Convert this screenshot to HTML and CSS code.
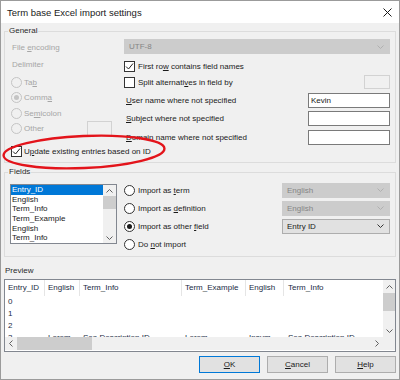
FILE: index.html
```html
<!DOCTYPE html>
<html lang="en">
<head>
    <meta charset="UTF-8">
    <title>Term base Excel import settings</title>
    <link rel="stylesheet" href="styles.css">
</head>
<body>
    <div class="window">
        <div class="titlebar">
            <span class="title">Term base Excel import settings</span>
            <svg class="close" width="9" height="9" viewBox="0 0 9 9"><path d="M0.5 0.5L8.5 8.5M8.5 0.5L0.5 8.5" stroke="#1a1a1a" stroke-width="1" fill="none"/></svg>
        </div>

        <div class="client">
            <fieldset class="group general">
                <legend>General</legend>
                <div class="cols">
                    <div class="left">
                        <div class="lrow r-enc dis"><span>File <u>e</u>ncoding</span></div>
                        <div class="lrow r-delim dis"><span>Delimiter</span></div>
                        <div class="lrow r-tab dis"><span class="radio dis"></span><span>Ta<u>b</u></span></div>
                        <div class="lrow r-comma dis"><span class="radio dis on"></span><span>Comm<u>a</u></span></div>
                        <div class="lrow r-semi dis"><span class="radio dis"></span><span>Se<u>m</u>icolon</span></div>
                        <div class="lrow r-other dis"><span class="radio dis"></span><span class="other-label">Other</span><span class="smallbox"></span></div>
                    </div>
                    <div class="right">
                        <div class="combo dis wide"><span>UTF-8</span>
                            <svg class="chev" width="7" height="4" viewBox="0 0 7 4"><path d="M0.5 0.5L3.5 3.5L6.5 0.5" fill="none" stroke="#b0b0b0"/></svg>
                        </div>
                        <div class="rrow r-first"><span class="check on"><svg width="9" height="9" viewBox="0 0 9 9"><path d="M1 4.5L3.5 7L8 1.5" fill="none" stroke="#222" stroke-width="1"/></svg></span><span>First ro<u>w</u> contains field names</span></div>
                        <div class="rrow r-split"><span class="check"></span><span>Split alternati<u>v</u>es in field by</span><span class="smallbox split-box"></span></div>
                        <div class="rrow r-user"><span><u>U</u>ser name where not specified</span><span class="textbox">Kevin</span></div>
                        <div class="rrow r-subj"><span><u>S</u>ubject where not specified</span><span class="textbox"></span></div>
                        <div class="rrow r-dom"><span><u>D</u>omain name where not specified</span><span class="textbox"></span></div>
                    </div>
                </div>
                <div class="update"><span class="check on"><svg width="9" height="9" viewBox="0 0 9 9"><path d="M1 4.5L3.5 7L8 1.5" fill="none" stroke="#222" stroke-width="1"/></svg></span><span>U<u>p</u>date existing entries based on ID</span></div>
            </fieldset>

            <fieldset class="group fields">
                <legend>Fields</legend>
                <div class="fields-body">
                    <div class="listbox">
                        <div class="items">
                            <div class="item sel">Entry_ID</div>
                            <div class="item">English</div>
                            <div class="item">Term_Info</div>
                            <div class="item">Term_Example</div>
                            <div class="item">English</div>
                            <div class="item">Term_Info</div>
                        </div>
                        <div class="lb-scroll">
                            <div class="arrow up"><svg width="7" height="4" viewBox="0 0 7 4"><path d="M0.5 3.5L3.5 0.5L6.5 3.5" fill="none" stroke="#606060"/></svg></div>
                            <div class="lb-thumb"></div>
                            <div class="lb-track"></div>
                            <div class="arrow down"><svg width="7" height="4" viewBox="0 0 7 4"><path d="M0.5 0.5L3.5 3.5L6.5 0.5" fill="none" stroke="#606060"/></svg></div>
                        </div>
                    </div>
                    <div class="options">
                        <div class="orow">
                            <span class="radio"></span><span>Import as <u>t</u>erm</span>
                            <div class="combo dis"><span>English</span><svg class="chev" width="7" height="4" viewBox="0 0 7 4"><path d="M0.5 0.5L3.5 3.5L6.5 0.5" fill="none" stroke="#b0b0b0"/></svg></div>
                        </div>
                        <div class="orow">
                            <span class="radio"></span><span>Import as <u>d</u>efinition</span>
                            <div class="combo dis"><span>English</span><svg class="chev" width="7" height="4" viewBox="0 0 7 4"><path d="M0.5 0.5L3.5 3.5L6.5 0.5" fill="none" stroke="#b0b0b0"/></svg></div>
                        </div>
                        <div class="orow">
                            <span class="radio on"></span><span>Import as other <u>f</u>ield</span>
                            <div class="combo active"><span>Entry ID</span><svg class="chev" width="7" height="4" viewBox="0 0 7 4"><path d="M0.5 0.5L3.5 3.5L6.5 0.5" fill="none" stroke="#333"/></svg></div>
                        </div>
                        <div class="orow">
                            <span class="radio"></span><span>Do <u>n</u>ot import</span>
                        </div>
                    </div>
                </div>
            </fieldset>

            <div class="preview-label">Preview</div>
            <div class="preview">
                <div class="pv-main">
                    <div class="pv-table">
                        <div class="pv-head">
                            <span class="c1">Entry_ID</span><span class="c2">English</span><span class="c3">Term_Info</span><span class="c4">Term_Example</span><span class="c5">English</span><span class="c6">Term_Info</span>
                        </div>
                        <div class="pv-row"><span class="c1">0</span></div>
                        <div class="pv-row"><span class="c1">1</span></div>
                        <div class="pv-row"><span class="c1">2</span></div>
                        <div class="pv-row"><span class="c1">3</span><span class="c2">Lorem</span><span class="c3">Sea Description ID</span><span class="c4">Lorem</span><span class="c5">Ipsum</span><span class="c6">Sea Description ID</span></div>
                    </div>
                    <div class="vscroll">
                        <div class="arrow v"><svg width="7" height="4" viewBox="0 0 7 4"><path d="M0.5 3.5L3.5 0.5L6.5 3.5" fill="none" stroke="#606060"/></svg></div>
                        <div class="v-thumb"></div>
                        <div class="v-track"></div>
                        <div class="arrow v"><svg width="7" height="4" viewBox="0 0 7 4"><path d="M0.5 0.5L3.5 3.5L6.5 0.5" fill="none" stroke="#606060"/></svg></div>
                    </div>
                </div>
                <div class="hscroll-row">
                    <div class="arrow h"><svg width="4" height="7" viewBox="0 0 4 7"><path d="M3.5 0.5L0.5 3.5L3.5 6.5" fill="none" stroke="#606060"/></svg></div>
                    <div class="h-thumb"></div>
                    <div class="h-track"></div>
                    <div class="arrow h"><svg width="4" height="7" viewBox="0 0 4 7"><path d="M0.5 0.5L3.5 3.5L0.5 6.5" fill="none" stroke="#606060"/></svg></div>
                    <div class="corner"></div>
                </div>
            </div>

            <div class="buttons">
                <button class="btn default"><u>O</u>K</button>
                <button class="btn"><u>C</u>ancel</button>
                <button class="btn"><u>H</u>elp</button>
            </div>
        </div>

        <!-- red highlight drawn over the dialog -->
        <svg class="highlight" width="172" height="44" viewBox="0 0 172 44">
            <ellipse cx="83" cy="22" rx="80.5" ry="16" fill="none" stroke="#e3141b" stroke-width="2.4" transform="rotate(-2.5 83 22)"/>
        </svg>
    </div>
</body>
</html>
```

FILE: styles.css
```css
body {
    margin: 0;
    background: #ffffff;
}
.window {
    position: relative;
    width: 400px;
    height: 380px;
    box-sizing: border-box;
    border: 1px solid #9b9b9b;
    background: #f0f0f0;
    font-family: "Liberation Sans", Arial, sans-serif;
    font-size: 8px;
    color: #1a1a1a;
}
.titlebar {
    height: 22px;
    background: #ffffff;
    display: flex;
    align-items: center;
    justify-content: space-between;
    padding: 0 7px 0 6px;
}
.title {
    font-size: 9.5px;
    color: #1a1a1a;
}
.close {
    display: block;
}
.client {
    padding: 2px 3px 0 3px;
}
u {
    text-decoration-thickness: 1px;
    text-underline-offset: 1px;
}

/* group boxes */
.group {
    margin: 0;
    min-width: 0;
    border: 1px solid #dcdcdc;
    padding: 2px 5px 5px 6px;
}
.group legend {
    padding: 0 1px;
    margin-left: -3px;
    line-height: 12px;
    color: #2a2a2a;
}
.fields {
    margin-top: 3px;
    padding: 3px 5px 3px 6px;
}
.dis {
    color: #a6a6a6;
}

.cols {
    display: flex;
}
.left {
    width: 113px;
    display: flex;
    flex-direction: column;
}
.right {
    width: 266px;
    display: flex;
    flex-direction: column;
}
.lrow {
    display: flex;
    align-items: center;
}
.r-enc { height: 16px; padding-left: 1px; }
.r-delim { height: 19px; padding-left: 1px; }
.r-tab { height: 16px; }
.r-comma { height: 15px; }
.r-semi { height: 16px; }
.r-other { height: 15px; }
.other-label {
    width: 63px;
}

/* radios and checks */
.radio {
    width: 11px;
    height: 11px;
    box-sizing: border-box;
    border: 1px solid #333;
    border-radius: 50%;
    background: #fff;
    margin-right: 2px;
    flex: none;
    display: flex;
    align-items: center;
    justify-content: center;
}
.radio.dis {
    border-color: #c4c4c4;
    background: #f0f0f0;
}
.radio.on::after {
    content: "";
    width: 5px;
    height: 5px;
    border-radius: 50%;
    background: #1a1a1a;
}
.radio.dis.on::after {
    background: #c4c4c4;
}
.check {
    width: 11px;
    height: 11px;
    box-sizing: border-box;
    border: 1px solid #333;
    background: #fff;
    margin-right: 3px;
    flex: none;
    display: flex;
    align-items: center;
    justify-content: center;
}
.check svg {
    display: block;
}

/* combos and edits */
.combo {
    height: 15px;
    box-sizing: border-box;
    display: flex;
    align-items: center;
    justify-content: space-between;
    padding: 0 5px 0 4px;
    border: 1px solid #cccccc;
    background: #cccccc;
    color: #858585;
    width: 108px;
    margin-left: auto;
}
.combo.wide {
    width: 266px;
    margin-left: 0;
    margin-bottom: 4px;
}
.combo.active {
    background: #e1e1e1;
    border-color: #adadad;
    color: #1a1a1a;
}
.chev {
    display: block;
}
.rrow {
    display: flex;
    align-items: center;
    height: 16px;
}
.r-user { margin-top: 2px; padding-left: 2px; }
.r-subj { margin-top: 2px; padding-left: 2px; }
.r-dom { margin-top: 3px; padding-left: 2px; }
.textbox {
    margin-left: auto;
    width: 82px;
    height: 15px;
    box-sizing: border-box;
    border: 1px solid #7a7a7a;
    background: #fff;
    padding-left: 2px;
    line-height: 13px;
}
.smallbox {
    width: 25px;
    height: 15px;
    box-sizing: border-box;
    border: 1px solid #d2d2d2;
    background: #f0f0f0;
}
.split-box {
    margin-left: auto;
    width: 26px;
    height: 14px;
}
.update {
    display: flex;
    align-items: center;
    height: 11px;
    margin-top: 1px;
}
.update .check {
    margin-right: 2px;
}

/* fields */
.fields-body {
    display: flex;
    align-items: flex-start;
}
.listbox {
    width: 107px;
    height: 60px;
    margin: 3px 7px 0 -1px;
    box-sizing: border-box;
    border: 1px solid #828790;
    background: #fff;
    display: flex;
}
.items {
    flex: 1;
    overflow: hidden;
}
.item {
    line-height: 9.7px;
    height: 9.7px;
    padding-left: 1px;
    white-space: nowrap;
}
.item.sel {
    background: #0078d7;
    color: #fff;
}
.lb-scroll {
    width: 13px;
    display: flex;
    flex-direction: column;
    background: #f0f0f0;
}
.arrow {
    display: flex;
    align-items: center;
    justify-content: center;
    flex: none;
}
.arrow svg {
    display: block;
}
.lb-scroll .arrow {
    height: 11px;
}
.lb-thumb {
    height: 13px;
    background: #cdcdcd;
}
.lb-track {
    flex: 1;
}
.options {
    width: 266px;
}
.orow {
    display: flex;
    align-items: center;
    height: 18px;
}
.orow .radio {
    margin-right: 3px;
}

/* preview */
.preview-label {
    margin-top: 8px;
    line-height: 12px;
    padding-left: 1px;
    color: #2a2a2a;
}
.preview {
    margin-top: 2px;
    height: 73px;
    box-sizing: border-box;
    border: 1px solid #828790;
    background: #fff;
    display: flex;
    flex-direction: column;
}
.pv-main {
    display: flex;
    height: 57px;
}
.pv-table {
    flex: 1;
    overflow: hidden;
}
.pv-head,
.pv-row {
    display: flex;
    white-space: nowrap;
}
.pv-head span,
.pv-row span {
    box-sizing: border-box;
    padding-left: 3px;
    overflow: hidden;
    flex: none;
}
.pv-head {
    height: 16px;
    line-height: 16px;
    color: #1b2c44;
}
.pv-head span {
    border-right: 1px solid #e5e5e5;
    height: 16px;
}
.pv-row {
    height: 12px;
    line-height: 12px;
    color: #1b2c44;
}
.c1 { width: 40px; }
.c2 { width: 35px; }
.c3 { width: 102px; }
.c4 { width: 64px; }
.c5 { width: 38px; }
.c6 { width: 99px; border-right: none !important; padding-left: 4px !important; }
.vscroll {
    width: 12px;
    display: flex;
    flex-direction: column;
    background: #f0f0f0;
}
.vscroll .arrow {
    height: 13px;
}
.v-thumb {
    height: 18px;
    background: #cdcdcd;
}
.v-track {
    flex: 1;
}
.hscroll-row {
    height: 13px;
    display: flex;
    background: #f0f0f0;
}
.hscroll-row .arrow {
    width: 12px;
}
.h-thumb {
    width: 75px;
    background: #cdcdcd;
}
.h-track {
    flex: 1;
}
.corner {
    width: 12px;
    background: #f0f0f0;
}

/* buttons */
.buttons {
    display: flex;
    justify-content: flex-end;
    gap: 7px;
    margin-top: 4px;
}
.btn {
    width: 61px;
    height: 17px;
    padding: 0;
    border: 1px solid #adadad;
    background: #e1e1e1;
    font-family: "Liberation Sans", Arial, sans-serif;
    font-size: 8px;
    color: #1a1a1a;
}
.btn.default {
    border-color: #0078d7;
}

.highlight {
    position: absolute;
    left: 0;
    top: 129px;
}
```
